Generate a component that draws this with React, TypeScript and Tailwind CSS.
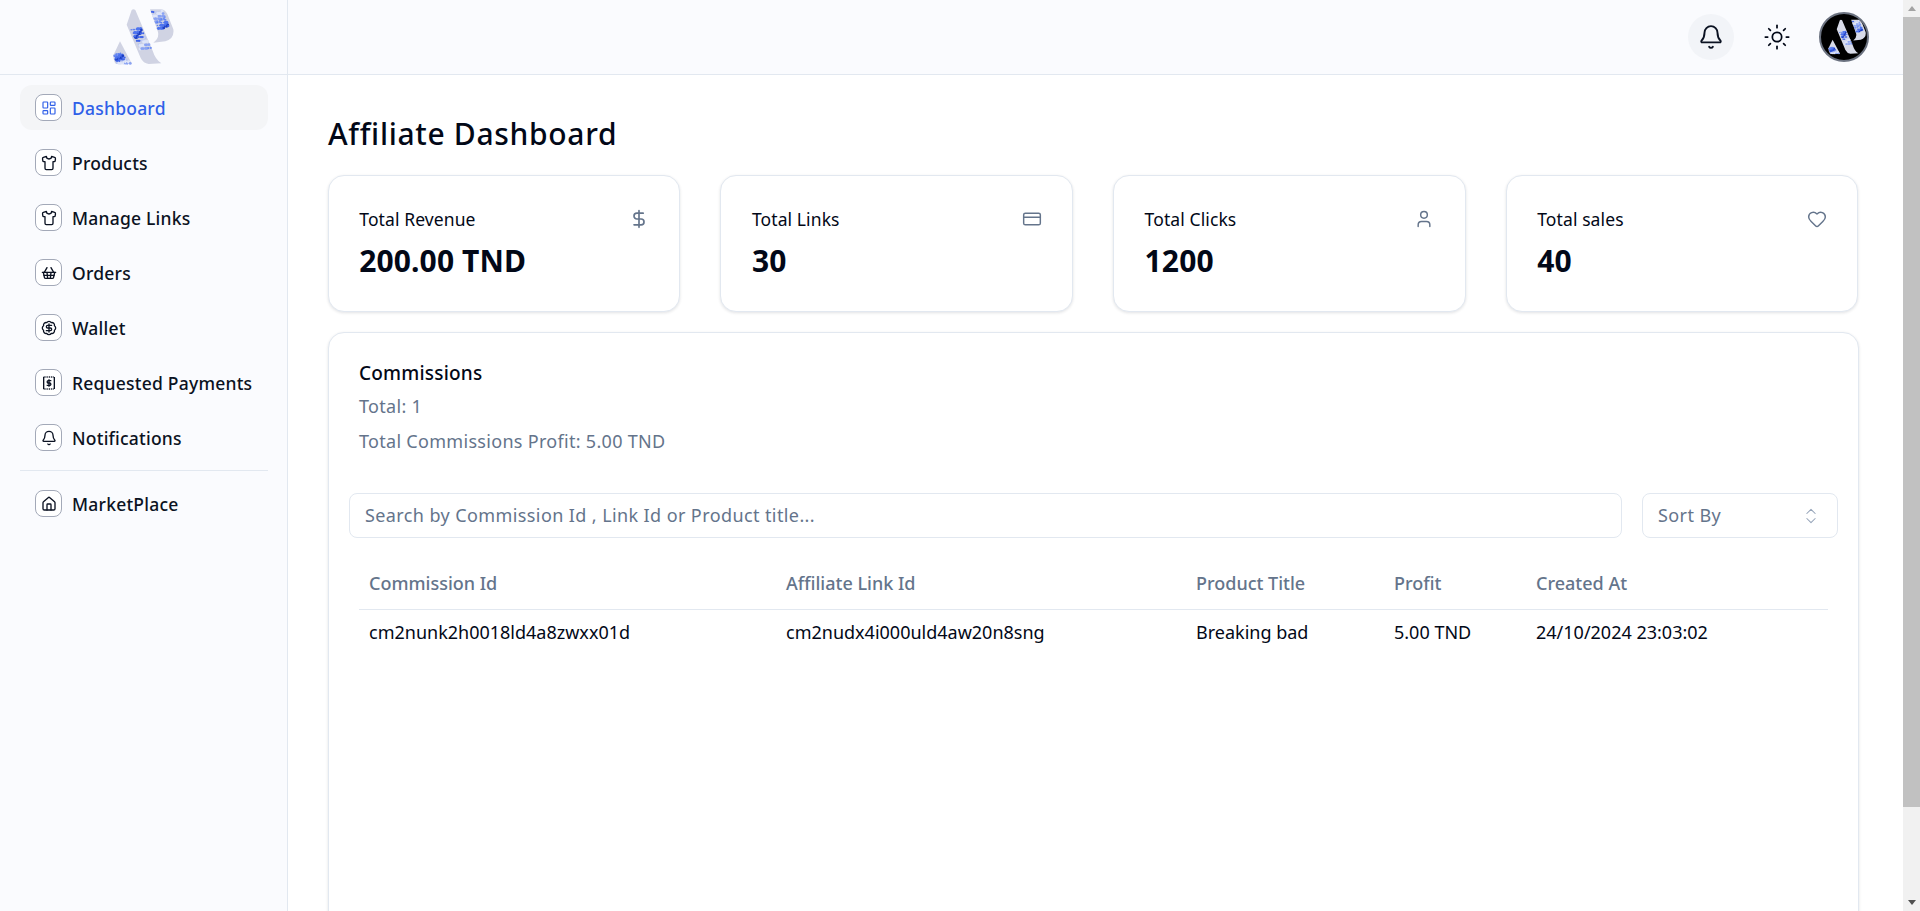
import React from "react";
import {
  Bell,
  ChevronsUpDown,
  CreditCard,
  DollarSign,
  Heart,
  LayoutDashboard,
  Shirt,
  ShoppingBasket,
  BadgeDollarSign,
  House,
  Sun,
  User,
} from "lucide-react";

const font = { fontFamily: '"Noto Sans", "Liberation Sans", sans-serif' };

const patches: [number, number, number, number, number, number, number, number][] = [
  [122, 88, 150, 80, 185, 145, 150, 152],
  [182, 32, 218, 32, 240, 82, 205, 88],
  [72, 165, 90, 158, 125, 192, 78, 192],
];
const blues = ["#5d7ff0", "#3f64e8", "#8aa3f3", "#4f74ee", "#b4c3f6", "#6f8ff2", "#1d3fc4", "#dfe5f8"];

function Speckle() {
  const dots: React.ReactNode[] = [];
  patches.forEach((p, pi) => {
    for (let i = 0; i < 7; i++) {
      for (let j = 0; j < 8; j++) {
        const seed = (i * 37 + j * 53 + pi * 17) % 29;
        const u = (i + 0.5 + ((seed % 5) - 2) * 0.12) / 7;
        const v = (j + 0.5 + ((seed % 7) - 3) * 0.1) / 8;
        const tx = p[0] + (p[2] - p[0]) * u;
        const ty = p[1] + (p[3] - p[1]) * u;
        const bx = p[6] + (p[4] - p[6]) * u;
        const by = p[7] + (p[5] - p[7]) * u;
        dots.push(
          <circle
            key={`${pi}-${i}-${j}`}
            cx={tx + (bx - tx) * v}
            cy={ty + (by - ty) * v}
            r={2.5 + (seed % 4) * 0.8}
            fill={blues[seed % blues.length]}
          />
        );
      }
    }
  });
  return <g>{dots}</g>;
}

function Logo({ width, dark = false }: { width: number; dark?: boolean }) {
  const gray = dark ? "#d8dbe8" : "#d0d3e3";
  return (
    <svg className="blur-[0.5px]" width={width} height={(width * 225) / 300} viewBox="0 0 300 225">
      <path d="M125 30 Q130 26 136 30 L188 152 Q196 178 214 190 L176 192 Q160 190 152 174 L110 74 Z" fill={gray} />
      <path d="M180 28 L214 28 Q226 30 232 42 L250 88 Q254 116 226 124 L190 128 Q208 116 204 96 Z" fill={gray} />
      <path d="M90 124 L126 192 L78 192 Q70 184 70 166 Z" fill={gray} />
      <Speckle />
    </svg>
  );
}

function ReceiptDollar() {
  return (
    <svg width="16" height="16" viewBox="0 0 24 24" fill="none" stroke="currentColor" strokeWidth="2" strokeLinecap="butt" strokeLinejoin="round">
      <path d="M4 3v18M20 3v18" />
      <path d="M4 3h16M4 21h16" strokeDasharray="1.5 1.2" />
      <path d="M15.5 8.5H11a1.75 1.75 0 0 0 0 3.5h2a1.75 1.75 0 0 1 0 3.5H8.5" />
      <path d="M12 6.5v11" />
    </svg>
  );
}

const items: { label: string; icon: React.ReactNode; active?: boolean }[] = [
  { label: "Dashboard", icon: <LayoutDashboard size={16} strokeWidth={1.75} />, active: true },
  { label: "Products", icon: <Shirt size={16} strokeWidth={2} /> },
  { label: "Manage Links", icon: <Shirt size={16} strokeWidth={2} /> },
  { label: "Orders", icon: <ShoppingBasket size={16} strokeWidth={2} /> },
  { label: "Wallet", icon: <BadgeDollarSign size={16} strokeWidth={2} /> },
  { label: "Requested Payments", icon: <ReceiptDollar /> },
  { label: "Notifications", icon: <Bell size={16} strokeWidth={2} /> },
];

function NavItem({ label, icon, active }: { label: string; icon: React.ReactNode; active?: boolean }) {
  return (
    <div className={`flex h-[45px] items-center gap-[10px] rounded-xl px-[15px] ${active ? "bg-[#f4f5f7] text-[#2f5fe8]" : "text-[#0b1222]"}`}>
      <span className="flex h-[27px] w-[27px] shrink-0 items-center justify-center rounded-lg border border-[#a3a9b8] bg-white">{icon}</span>
      <span className="whitespace-nowrap pt-px text-[17.5px] font-[470] tracking-[0.22px]">{label}</span>
    </div>
  );
}

function StatCard({ title, value, icon }: { title: string; value: string; icon: React.ReactNode }) {
  return (
    <div className="h-[137px] rounded-2xl border border-[#e2e8f0] bg-white pl-[30.5px] pr-[30.5px] pt-[31px] shadow-[0_1px_3px_rgba(15,23,42,0.12)]">
      <div className="flex items-center justify-between text-[#64748b]">
        <span className="text-[17.5px] font-[430] leading-[24px] tracking-[0.1px] text-[#020817]">{title}</span>
        {icon}
      </div>
      <div className="mt-[10px] text-[30px] font-bold leading-[40px] tracking-[0.1px] text-[#020817]">{value}</div>
    </div>
  );
}

export default function App() {
  return (
    <div className="flex h-[911px] w-full overflow-hidden bg-white text-[#020817]" style={font}>
      <aside className="flex w-[288px] shrink-0 flex-col border-r border-[#e2e8f0] bg-[#fafbfe]">
        <div className="flex h-[75px] shrink-0 items-center justify-center border-b border-[#e2e8f0] pr-[7px]">
          <Logo width={100} />
        </div>
        <nav className="flex flex-col gap-[10px] pl-[20px] pr-[19px] pt-[10px]">
          {items.map((it) => (
            <NavItem key={it.label} {...it} />
          ))}
          <div className="border-t border-[#e2e8f0]" />
          <NavItem label="MarketPlace" icon={<House size={16} strokeWidth={2} />} />
        </nav>
      </aside>
      <div className="flex min-w-0 flex-1 flex-col">
        <header className="flex h-[75px] shrink-0 items-center justify-end border-b border-[#e2e8f0] bg-[#fafbfe] pr-[34px]">
          <span className="flex h-[46px] w-[46px] items-center justify-center rounded-full bg-[#f2f4f8] text-[#0b1222]">
            <Bell size={26} strokeWidth={1.75} />
          </span>
          <span className="ml-[29px] flex h-[28px] w-[28px] items-center justify-center">
            <Sun size={28} strokeWidth={1.5} />
          </span>
          <span className="ml-[28px] flex h-[50px] w-[50px] items-center justify-center overflow-hidden rounded-full border-2 border-[#6b7280] bg-black">
            <span className="ml-[2px] block shrink-0">
              <Logo width={62} dark />
            </span>
          </span>
        </header>
        <main className="flex min-h-0 flex-1 flex-col px-[40px] pt-[41px]">
          <h1 className="text-[30px] font-[540] leading-[36px] tracking-[0.68px]">Affiliate Dashboard</h1>
          <div className="ml-[-0.2px] mt-[23px] grid w-[1530.6px] grid-cols-4 gap-[40px]">
            <StatCard title="Total Revenue" value="200.00 TND" icon={<DollarSign size={20} />} />
            <StatCard title="Total Links" value="30" icon={<CreditCard size={20} strokeWidth={1.75} />} />
            <StatCard title="Total Clicks" value="1200" icon={<User size={20} strokeWidth={1.75} />} />
            <StatCard title="Total sales" value="40" icon={<Heart size={20} strokeWidth={1.75} />} />
          </div>
          <section className="mt-[20px] mr-[4px] min-h-[600px] rounded-2xl border border-[#e2e8f0] bg-white px-[20px] pt-[26px] shadow-[0_1px_3px_rgba(15,23,42,0.12)]">
            <div className="px-[10px]">
              <h2 className="text-[19px] font-[550] leading-[28px] tracking-[0.2px]">Commissions</h2>
              <p className="mt-[7px] text-[18px] leading-[24px] tracking-[0.3px] text-[#64748b]">Total: 1</p>
              <p className="mt-[11px] text-[18px] leading-[24px] tracking-[0.3px] text-[#64748b]">Total Commissions Profit: 5.00 TND</p>
            </div>
            <div className="mt-[40px] flex gap-[20px]">
              <div className="flex h-[45px] flex-1 items-center rounded-lg border border-[#e2e8f0] px-[15px] text-[18px] tracking-[0.4px] text-[#64748b]">
                Search by Commission Id , Link Id or Product title...
              </div>
              <div className="flex h-[45px] w-[196px] items-center justify-between rounded-lg border border-[#e2e8f0] pl-[15px] pr-[16px] text-[18px] tracking-[0.4px] text-[#64748b]">
                Sort By
                <ChevronsUpDown size={20} strokeWidth={1.25} className="text-[#94a3b8]" />
              </div>
            </div>
            <table className="mx-[10px] mt-[21px] w-[calc(100%-20px)] table-fixed border-collapse text-left text-[18px]">
              <thead>
                <tr className="h-[50px] border-b border-[#e2e8f0] text-[#64748b]">
                  <th className="w-[417px] px-[10px] font-medium">Commission Id</th>
                  <th className="w-[410px] px-[10px] font-medium">Affiliate Link Id</th>
                  <th className="w-[198px] px-[10px] font-medium">Product Title</th>
                  <th className="w-[142px] px-[10px] font-medium">Profit</th>
                  <th className="px-[10px] font-medium">Created At</th>
                </tr>
              </thead>
              <tbody>
                <tr className="h-[46px]">
                  <td className="px-[10px]">cm2nunk2h0018ld4a8zwxx01d</td>
                  <td className="px-[10px]">cm2nudx4i000uld4aw20n8sng</td>
                  <td className="px-[10px]">Breaking bad</td>
                  <td className="px-[10px]">5.00 TND</td>
                  <td className="px-[10px]">24/10/2024 23:03:02</td>
                </tr>
              </tbody>
            </table>
          </section>
        </main>
      </div>
      <div className="flex w-[17px] shrink-0 flex-col items-center bg-[#f1f1f1]">
        <div className="flex h-[17px] w-full items-center justify-center">
          <span className="h-0 w-0 border-x-[4.5px] border-b-[5px] border-x-transparent border-b-[#a3a3a3]" />
        </div>
        <div className="h-[790px] w-full bg-[#c1c1c1]" />
        <div className="mt-auto flex h-[17px] w-full items-center justify-center">
          <span className="h-0 w-0 border-x-[4.5px] border-t-[5px] border-x-transparent border-t-[#505050]" />
        </div>
      </div>
    </div>
  );
}
